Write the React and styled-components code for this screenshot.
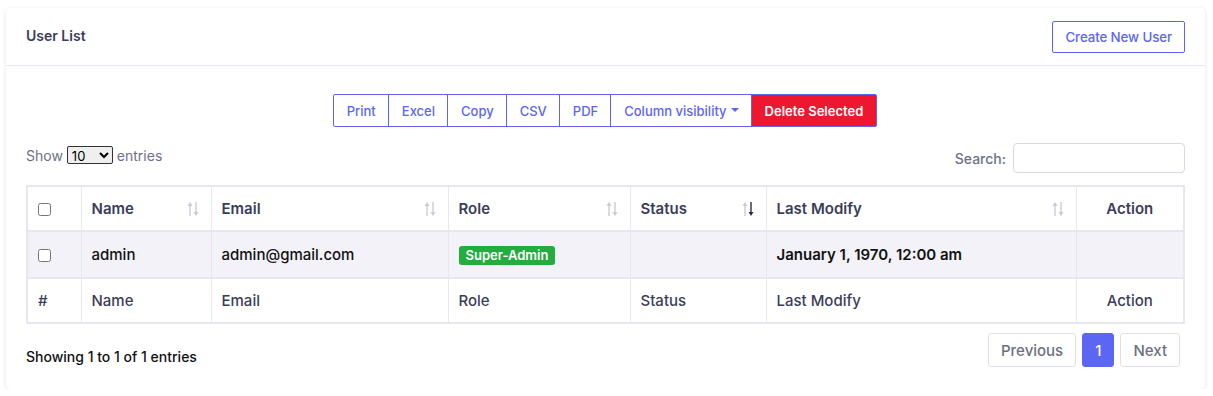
import React from 'react'
import styled, { createGlobalStyle } from 'styled-components'

const Global = createGlobalStyle`
  body {
    margin: 0;
    background: #fff;
    font-family: Inter, "Noto Sans", sans-serif;
    color: #3b3d58;
  }
`

const columns = [
  { label: 'Name', width: 130 },
  { label: 'Email', width: 237 },
  { label: 'Role', width: 182 },
  { label: 'Status', width: 136, active: true },
  { label: 'Last Modify', width: 310 },
]

const SortIcon = ({ active }) => (
  <Sort width="12" height="16" viewBox="0 0 12 16">
    <g fill="#c9cad6" stroke="#c9cad6">
      <line x1="3" y1="4" x2="3" y2="15" strokeWidth="1.4" />
      <polygon points="0.5,5 3,1 5.5,5" strokeWidth="0" />
    </g>
    <g fill={active ? '#2d2f45' : '#c9cad6'} stroke={active ? '#2d2f45' : '#c9cad6'}>
      <line x1="9" y1="1" x2="9" y2="12" strokeWidth="1.4" />
      <polygon points="6.5,11 9,15 11.5,11" strokeWidth="0" />
    </g>
  </Sort>
)

const App = () => {
  return (
    <Page>
      <Global />
      <Card>
        <CardHeader>
          <Title>User List</Title>
          <OutlineButton>Create New User</OutlineButton>
        </CardHeader>
        <CardBody>
          <ButtonBar>
            <GroupButton>Print</GroupButton>
            <GroupButton>Excel</GroupButton>
            <GroupButton>Copy</GroupButton>
            <GroupButton>CSV</GroupButton>
            <GroupButton>PDF</GroupButton>
            <GroupButton>Column visibility<Caret /></GroupButton>
            <GroupButton danger>Delete Selected</GroupButton>
          </ButtonBar>

          <Controls>
            <Length>
              Show
              <Select defaultValue="10">
                <option>10</option>
                <option>25</option>
              </Select>
              entries
            </Length>
            <SearchLabel>
              Search:
              <SearchInput />
            </SearchLabel>
          </Controls>

          <Table>
            <thead>
              <tr>
                <Th style={{ width: 54 }}><Check type="checkbox" /></Th>
                {columns.map((c) => (
                  <Th key={c.label} style={{ width: c.width }}>
                    <HeadInner>
                      {c.label}
                      <SortIcon active={c.active} />
                    </HeadInner>
                  </Th>
                ))}
                <Th center>Action</Th>
              </tr>
            </thead>
            <tbody>
              <Row>
                <Td><Check type="checkbox" /></Td>
                <Td>admin</Td>
                <Td>admin@gmail.com</Td>
                <Td><Badge>Super-Admin</Badge></Td>
                <Td></Td>
                <Td strong>January 1, 1970, 12:00 am</Td>
                <Td></Td>
              </Row>
            </tbody>
            <tfoot>
              <tr>
                <Th>#</Th>
                <Th>Name</Th>
                <Th>Email</Th>
                <Th>Role</Th>
                <Th>Status</Th>
                <Th>Last Modify</Th>
                <Th center>Action</Th>
              </tr>
            </tfoot>
          </Table>

          <Footer>
            <Info>Showing 1 to 1 of 1 entries</Info>
            <Pager>
              <PageButton>Previous</PageButton>
              <PageButton active>1</PageButton>
              <PageButton>Next</PageButton>
            </Pager>
          </Footer>
        </CardBody>
      </Card>
    </Page>
  )
}

export default App

const Page = styled.div`
  padding: 8px 8px 0 6px;
`

const Card = styled.div`
  width: 1199px;
  background: #fff;
  border-radius: 5px;
  box-shadow: 0 1px 4px rgba(60, 60, 120, 0.14);
`

const CardHeader = styled.div`
  height: 58px;
  box-sizing: border-box;
  border-bottom: 1px solid #e8e8f1;
  display: flex;
  align-items: center;
  justify-content: space-between;
  padding: 0 20px 0 20px;
`

const Title = styled.h4`
  margin: -2px 0 0;
  font-size: 14px;
  font-weight: 600;
  color: #3b3d58;
`

const OutlineButton = styled.button`
  height: 32px;
  padding: 0 12px;
  border: 1px solid #5b66f2;
  border-radius: 2px;
  background: #fff;
  color: #5b66f2;
  font-family: inherit;
  font-size: 13.3px;
  font-weight: 500;
  letter-spacing: -0.1px;
`

const CardBody = styled.div`
  padding: 28px 20px 22px 20px;
`

const ButtonBar = styled.div`
  display: flex;
  justify-content: center;
`

const GroupButton = styled.button`
  height: 33px;
  padding: 0 12px 0 13px;
  border: 1px solid #5b66f2;
  margin-left: -1px;
  background: ${(p) => (p.danger ? '#ee1730' : '#fff')};
  color: ${(p) => (p.danger ? '#fff' : '#5b66f2')};
  font-family: inherit;
  font-size: 13px;
  font-weight: ${(p) => (p.danger ? 600 : 500)};
  display: flex;
  align-items: center;
  gap: 4px;
  &:first-child { border-radius: 2px 0 0 2px; }
  &:last-child { border-radius: 0 2px 2px 0; padding: 0 13px; }
`

const Caret = styled.span`
  width: 0;
  height: 0;
  border-left: 4px solid transparent;
  border-right: 4px solid transparent;
  border-top: 4px solid #5b66f2;
  margin-bottom: 2px;
`

const Controls = styled.div`
  display: flex;
  justify-content: space-between;
  align-items: center;
  margin-top: 16px;
  height: 30px;
`

const Length = styled.label`
  display: flex;
  align-items: center;
  gap: 4px;
  font-size: 14px;
  color: #6e7088;
  margin-top: -6px;
`

const Select = styled.select`
  font-family: Inter, sans-serif;
  font-size: 13px;
  color: #000;
  height: 18px;
  padding: 0;
  border: 1px solid #333;
  border-radius: 2px;
  width: 46px;
`

const SearchLabel = styled.label`
  display: flex;
  align-items: center;
  gap: 7px;
  font-size: 14px;
  font-weight: 500;
  color: #6e7088;
`

const SearchInput = styled.input`
  width: 172px;
  height: 30px;
  box-sizing: border-box;
  border: 1px solid #d9d8e6;
  border-radius: 4px;
`

const Table = styled.table`
  width: 100%;
  margin-top: 12px;
  border-collapse: collapse;
  border: 2px solid #e7e7f1;
  font-size: 15px;
`

const Th = styled.th`
  height: 45px;
  box-sizing: border-box;
  padding: 0 10px;
  text-align: ${(p) => (p.center ? 'center' : 'left')};
  font-weight: 600;
  color: #3b3d58;
  border: 1px solid #e7e7f1;
  thead & { border-bottom: 2px solid #e7e7f1; }
  tfoot & { border-top: 2px solid #e7e7f1; font-weight: 500; }
`

const HeadInner = styled.div`
  display: flex;
  align-items: center;
  justify-content: space-between;
`

const Sort = styled.svg`
  display: block;
  margin-right: 2px;
  flex-shrink: 0;
`

const Check = styled.input`
  margin: 0;
  width: 13px;
  height: 13px;
  vertical-align: middle;
`

const Row = styled.tr`
  background: #f2f2f8;
`

const Td = styled.td`
  height: 45px;
  padding: 0 10px;
  border: 1px solid #e7e7f1;
  color: #111;
  font-weight: ${(p) => (p.strong ? 600 : 500)};
`

const Badge = styled.span`
  display: inline-block;
  background: #24ad3f;
  color: #fff;
  font-size: 13px;
  font-weight: 600;
  padding: 2px 7px;
  border-radius: 3px;
  line-height: 15px;
`

const Footer = styled.div`
  display: flex;
  justify-content: space-between;
  align-items: flex-start;
  margin-top: 9px;
`

const Info = styled.div`
  font-size: 14px;
  font-weight: 500;
  color: #111;
  margin-top: 15px;
`

const Pager = styled.div`
  display: flex;
  gap: 6px;
  margin-right: 5px;
`

const PageButton = styled.button`
  height: 34px;
  padding: 0 12px;
  border: 1px solid ${(p) => (p.active ? '#5b66f2' : '#dedfe8')};
  border-radius: 3px;
  background: ${(p) => (p.active ? '#5b66f2' : '#fff')};
  color: ${(p) => (p.active ? '#fff' : '#6d6f80')};
  font-family: inherit;
  font-size: 15px;
  font-weight: 500;
`
